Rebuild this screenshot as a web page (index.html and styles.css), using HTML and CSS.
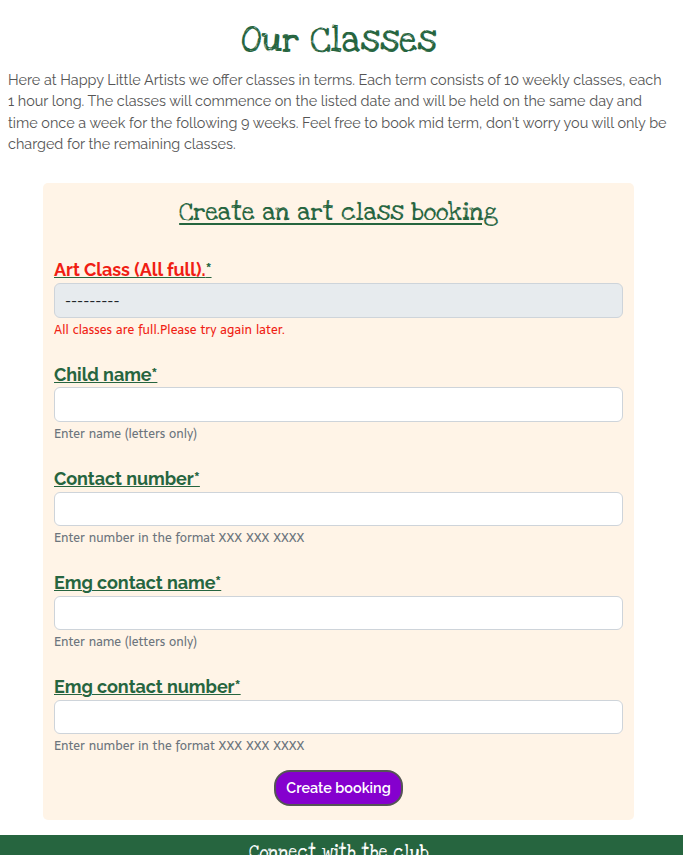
FILE: index.html
```html
<!DOCTYPE html>
<html lang="en">
<head>
<meta charset="utf-8">
<title>Our Classes</title>
<link rel="stylesheet" href="styles.css">
</head>
<body>
<main>
<h1>Our Classes</h1>
<p class="intro"><span>Here at Happy Little Artists we offer classes in terms. Each term consists of 10 weekly classes, each</span><span>1 hour long. The classes will commence on the listed date and will be held on the same day and</span><span>time once a week for the following 9 weeks. Feel free to book mid term, don't worry you will only be</span><span>charged for the remaining classes.</span></p>
<form class="card">
<h2>Create an art class booking</h2>
<div class="field full"><label for="art"><span class="name">Art Class (All full).</span><span class="star">*</span></label><select id="art" disabled><option>---------</option></select><small>All classes are full.Please try again later.</small></div>
<div class="field"><label for="child">Child name*</label><input id="child"><small>Enter name (letters only)</small></div>
<div class="field"><label for="phone">Contact number*</label><input id="phone"><small>Enter number in the format XXX XXX XXXX</small></div>
<div class="field"><label for="emg">Emg contact name*</label><input id="emg"><small>Enter name (letters only)</small></div>
<div class="field"><label for="emgphone">Emg contact number*</label><input id="emgphone"><small>Enter number in the format XXX XXX XXXX</small></div>
<button type="button">Create booking</button>
</form>
</main>
<footer><h3>Connect with the club</h3></footer>
</body>
</html>
```
FILE: styles.css
```css
* { box-sizing: border-box; }
body { margin: 0; height: 855px; overflow: hidden; background: #fff; font-family: Sarala, "Noto Sans", sans-serif; }
h1, h2, h3, p { margin: 0; font-weight: 400; }
h1, h2, h3 { font-family: "Love Ya Like A Sister", "DejaVu Serif", serif; color: #26653f; text-align: center; white-space: nowrap; }
h1 { height: 69px; padding: 17px 5px 0 0; font-size: 35.8px; line-height: 48px; }
.intro { height: 114px; padding-left: 8px; font: 14.41px/21.4px Raleway, Lato, sans-serif; color: #555; }
.intro span { display: block; white-space: nowrap; }
.card { width: 591px; height: 637px; margin-left: 43px; padding: 12px 11px; border-radius: 5px; background: #fff4e7; }
h2 { height: 62px; font-size: 25px; line-height: 36px; text-decoration: underline 2px; text-underline-offset: 3px; }
.field { height: 104px; }
.field.full { height: 105px; }
label { display: block; width: max-content; height: 26px; font: bold 18px/26px Raleway, Lato, sans-serif; letter-spacing: -0.06px; color: #26653f; text-decoration: underline 1px; }
.full .name, .full small { color: #f01e14; }
.full small { letter-spacing: .07px; }
input, select { display: block; width: 100%; height: 34px; border: 1px solid #ced4da; border-radius: 6px; background: #fff; }
.full + .field input { height: 35px; margin-top: -1px; }
select { height: 35px; appearance: none; background: #e7ebee; padding: 2px 10px 0; font: 12.2px Sarala, "Noto Sans"; color: #212529; opacity: 1; }
small { display: block; font-size: 12.6px; line-height: 24px; word-spacing: .7px; color: #6c757d; }
button { display: block; margin: -8px auto 0; width: 129px; height: 36px; border: 2px solid #555; border-radius: 16px; background: #8500ce; color: #fff; font: 600 14.4px Raleway, Lato, sans-serif; padding: 0 0 2px; }
footer { margin-top: 15px; height: 20px; overflow: hidden; background: #26653f; }
h3 { padding-right: 5px; color: #fff; font-size: 18px; line-height: 36px; }
```
